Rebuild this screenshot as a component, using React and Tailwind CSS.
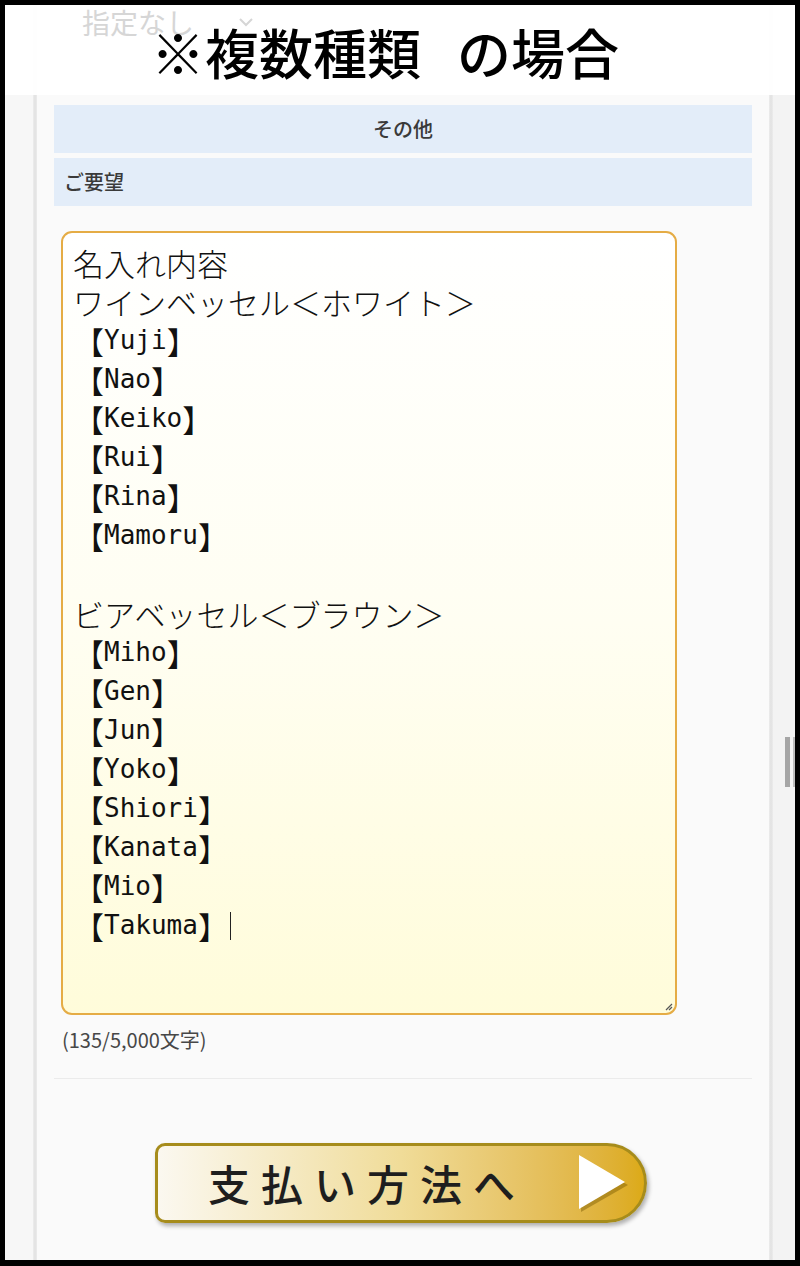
import React from 'react';

const jp = { fontFamily: '"Noto Sans CJK JP", "Noto Sans", sans-serif' };
const mono = { fontFamily: '"DejaVu Sans Mono", "Noto Sans CJK JP", monospace' };

const header = ['名入れ内容', 'ワインベッセル＜ホワイト＞'];
const white = ['Yuji', 'Nao', 'Keiko', 'Rui', 'Rina', 'Mamoru'];
const brown = ['Miho', 'Gen', 'Jun', 'Yoko', 'Shiori', 'Kanata', 'Mio'];

const Name = ({ name, caret }) => (
  <div className="h-[39px] flex items-center whitespace-pre">
    <span>【</span>
    <span className="text-[26px]" style={mono}>{name}</span>
    <span>】</span>
    {caret && <span className="ml-[1px] inline-block w-px h-[28px] bg-[#222]" />}
  </div>
);

const App = () => {
  return (
    <div className="w-[800px] h-[1266px] bg-black pt-[5px] px-[5px] pb-[6px]" style={jp}>
      <div className="relative flex h-full bg-[#f7f7f7]">
        {/* left gutter */}
        <div className="w-[28px] bg-[#f7f7f7]" />
        <div className="w-[4px] bg-gradient-to-r from-[#ededed] via-[#e1e1e1] to-[#ececec]" />

        {/* page body */}
        <main className="w-[732px] bg-[#fafafa] px-[17px] flex flex-col">
          <div className="h-[100px]" />

          <div className="h-[48px] bg-[#e3edf9] flex items-center justify-center text-[20px] font-medium text-[#3a3a3a]">その他</div>
          <div className="mt-[5px] h-[48px] bg-[#e3edf9] flex items-center pl-[10px] text-[20px] font-medium text-[#3a3a3a]">ご要望</div>

          <div className="relative mt-[25px] ml-[7px] w-[616px] h-[784px] rounded-[11px] border-2 border-[#e5ac45] bg-gradient-to-b from-white via-[#fffef2] to-[#fffcda] pt-[10px] pl-[10px] text-[31px] leading-[39px] font-light text-[#111]">
            {header.map((line) => (
              <div key={line} className="h-[39px] whitespace-pre">{line}</div>
            ))}
            {white.map((n) => <Name key={n} name={n} />)}
            <div className="h-[39px]" />
            <div className="h-[39px] whitespace-pre">ビアベッセル＜ブラウン＞</div>
            {brown.map((n) => <Name key={n} name={n} />)}
            <Name name="Takuma" caret />
            <svg className="absolute right-[2px] bottom-[2px]" width="9" height="9" viewBox="0 0 9 9" stroke="#555" strokeWidth="1.2">
              <path d="M8 2L2 8M8 5L5 8" />
            </svg>
          </div>

          <p className="mt-[12px] ml-[8px] text-[20px] leading-[26px] text-[#474747]">(135/5,000文字)</p>

          <div className="mt-[25px] h-px bg-[#ebebeb]" />

          <button className="mt-[64px] ml-[101px] w-[492px] h-[80px] rounded-l-[10px] rounded-r-[40px] border-[3px] border-[#a68c1c] bg-gradient-to-r from-[#fbf8f0] via-[#f0dc98] to-[#dcaa16] shadow-[2px_3px_4px_rgba(0,0,0,0.3)] flex items-center pl-[50px] pr-[14px]">
            <span className="text-[42px] leading-none tracking-[11px] font-medium text-[#1e1e1e]">支払い方法へ</span>
            <svg className="ml-auto" width="52" height="58" viewBox="0 0 52 58">
              <polygon points="3,4 50,31 3,58" fill="#7a5c00" opacity="0.45" />
              <polygon points="1,1 47,28 1,55" fill="#ffffff" />
            </svg>
          </button>
        </main>

        {/* right gutter + scrollbar */}
        <div className="w-[4px] bg-gradient-to-r from-[#ececec] via-[#e2e2e2] to-[#ececec]" />
        <div className="relative flex-1 bg-[#f3f3f3]">
          <div className="absolute left-[12px] top-[732px] w-[5px] h-[50px] bg-[#a6a6a6]" />
          <div className="absolute left-[20px] top-[732px] w-[2px] h-[50px] bg-[#bdbdbd]" />
        </div>

        {/* caption overlay */}
        <div className="absolute top-0 left-0 right-0 h-[90px] bg-white/95">
          <div className="absolute left-[77px] top-[2px] flex items-center gap-[44px] text-[28px] leading-[30px] text-[#d6d6d6]">
            <span>指定なし</span>
            <svg width="16" height="10" viewBox="0 0 16 10" fill="none" stroke="#d6d6d6" strokeWidth="2">
              <path d="M2 2l6 6 6-6" />
            </svg>
          </div>
          <div className="relative h-full flex items-center justify-center pr-[30px] pt-[4px]">
            <span className="text-[54px] font-medium text-black leading-none">※複数種類</span>
            <span className="ml-[36px] text-[54px] font-medium text-black leading-none">の場合</span>
          </div>
        </div>
      </div>
    </div>
  );
};

export default App;
